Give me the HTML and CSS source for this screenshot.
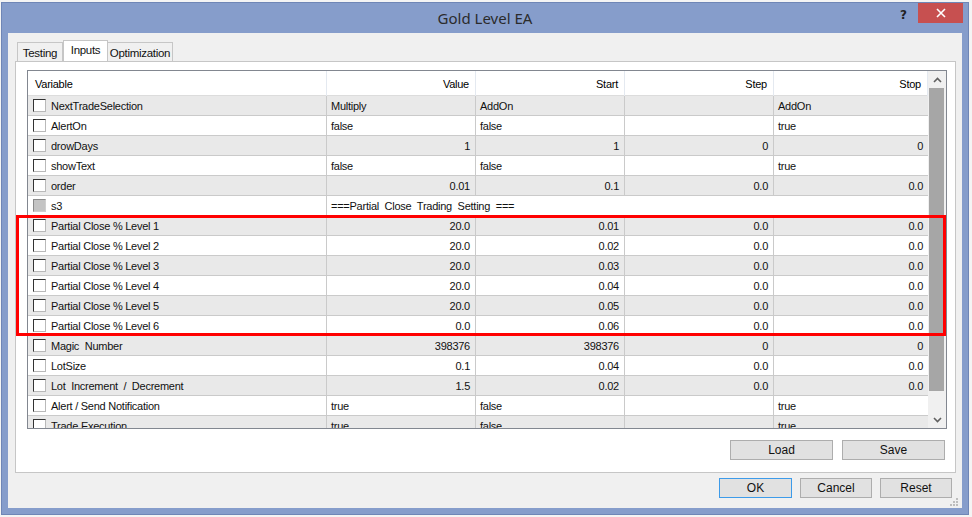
FILE: index.html
```html
<!DOCTYPE html>
<html lang="en">
<head>
    <meta charset="UTF-8">
    <title>Gold Level EA</title>
    <link rel="stylesheet" href="styles.css">
</head>
<body>

    <div class="window">
        <div class="titlebar">
            <div></div>
            <div class="title">Gold Level EA</div>
            <div class="controls">
                <span class="help">?</span>
                <span class="close">
                    <svg width="10" height="10" viewBox="0 0 10 10"><path d="M1 1L9 9M9 1L1 9" stroke="#fff" stroke-width="1.6"/></svg>
                </span>
            </div>
        </div>

        <div class="client">
            <div class="tabs">
                <div class="tab tab-testing">Testing</div>
                <div class="tab tab-inputs active">Inputs</div>
                <div class="tab tab-opt">Optimization</div>
            </div>

            <div class="panel">
                <div class="grid">
                    <div class="rows">
                        <div class="head">
                            <div class="hcell left">Variable</div>
                            <div class="hcell">Value</div>
                            <div class="hcell">Start</div>
                            <div class="hcell">Step</div>
                            <div class="hcell">Stop</div>
                        </div>

                        <div class="row grey">
                            <div class="cell var"><span class="check"></span>NextTradeSelection</div>
                            <div class="cell">Multiply</div>
                            <div class="cell">AddOn</div>
                            <div class="cell"></div>
                            <div class="cell">AddOn</div>
                        </div>
                        <div class="row">
                            <div class="cell var"><span class="check"></span>AlertOn</div>
                            <div class="cell">false</div>
                            <div class="cell">false</div>
                            <div class="cell"></div>
                            <div class="cell">true</div>
                        </div>
                        <div class="row grey">
                            <div class="cell var"><span class="check"></span>drowDays</div>
                            <div class="cell num">1</div>
                            <div class="cell num">1</div>
                            <div class="cell num">0</div>
                            <div class="cell num">0</div>
                        </div>
                        <div class="row">
                            <div class="cell var"><span class="check"></span>showText</div>
                            <div class="cell">false</div>
                            <div class="cell">false</div>
                            <div class="cell"></div>
                            <div class="cell">true</div>
                        </div>
                        <div class="row grey">
                            <div class="cell var"><span class="check"></span>order</div>
                            <div class="cell num">0.01</div>
                            <div class="cell num">0.1</div>
                            <div class="cell num">0.0</div>
                            <div class="cell num">0.0</div>
                        </div>
                        <div class="row">
                            <div class="cell var"><span class="check disabled"></span>s3</div>
                            <div class="cell span">===Partial  Close  Trading  Setting  ===</div>
                        </div>
                        <div class="row grey">
                            <div class="cell var"><span class="check"></span>Partial Close % Level 1</div>
                            <div class="cell num">20.0</div>
                            <div class="cell num">0.01</div>
                            <div class="cell num">0.0</div>
                            <div class="cell num">0.0</div>
                        </div>
                        <div class="row">
                            <div class="cell var"><span class="check"></span>Partial Close % Level 2</div>
                            <div class="cell num">20.0</div>
                            <div class="cell num">0.02</div>
                            <div class="cell num">0.0</div>
                            <div class="cell num">0.0</div>
                        </div>
                        <div class="row grey">
                            <div class="cell var"><span class="check"></span>Partial Close % Level 3</div>
                            <div class="cell num">20.0</div>
                            <div class="cell num">0.03</div>
                            <div class="cell num">0.0</div>
                            <div class="cell num">0.0</div>
                        </div>
                        <div class="row">
                            <div class="cell var"><span class="check"></span>Partial Close % Level 4</div>
                            <div class="cell num">20.0</div>
                            <div class="cell num">0.04</div>
                            <div class="cell num">0.0</div>
                            <div class="cell num">0.0</div>
                        </div>
                        <div class="row grey">
                            <div class="cell var"><span class="check"></span>Partial Close % Level 5</div>
                            <div class="cell num">20.0</div>
                            <div class="cell num">0.05</div>
                            <div class="cell num">0.0</div>
                            <div class="cell num">0.0</div>
                        </div>
                        <div class="row">
                            <div class="cell var"><span class="check"></span>Partial Close % Level 6</div>
                            <div class="cell num">0.0</div>
                            <div class="cell num">0.06</div>
                            <div class="cell num">0.0</div>
                            <div class="cell num">0.0</div>
                        </div>
                        <div class="row grey">
                            <div class="cell var"><span class="check"></span>Magic  Number</div>
                            <div class="cell num">398376</div>
                            <div class="cell num">398376</div>
                            <div class="cell num">0</div>
                            <div class="cell num">0</div>
                        </div>
                        <div class="row">
                            <div class="cell var"><span class="check"></span>LotSize</div>
                            <div class="cell num">0.1</div>
                            <div class="cell num">0.04</div>
                            <div class="cell num">0.0</div>
                            <div class="cell num">0.0</div>
                        </div>
                        <div class="row grey">
                            <div class="cell var"><span class="check"></span>Lot  Increment  /  Decrement</div>
                            <div class="cell num">1.5</div>
                            <div class="cell num">0.02</div>
                            <div class="cell num">0.0</div>
                            <div class="cell num">0.0</div>
                        </div>
                        <div class="row">
                            <div class="cell var"><span class="check"></span>Alert / Send Notification</div>
                            <div class="cell">true</div>
                            <div class="cell">false</div>
                            <div class="cell"></div>
                            <div class="cell">true</div>
                        </div>
                        <div class="row grey">
                            <div class="cell var"><span class="check"></span>Trade Execution</div>
                            <div class="cell">true</div>
                            <div class="cell">false</div>
                            <div class="cell"></div>
                            <div class="cell">true</div>
                        </div>
                    </div>

                    <div class="scrollbar">
                        <div class="arrow">
                            <svg width="9" height="6" viewBox="0 0 9 6"><path d="M1 5L4.5 1.5L8 5" fill="none" stroke="#606060" stroke-width="1.6"/></svg>
                        </div>
                        <div class="thumb"></div>
                        <div class="track"></div>
                        <div class="arrow">
                            <svg width="9" height="6" viewBox="0 0 9 6"><path d="M1 1L4.5 4.5L8 1" fill="none" stroke="#606060" stroke-width="1.6"/></svg>
                        </div>
                    </div>
                </div>

                <div class="panel-buttons">
                    <button class="btn wide">Load</button>
                    <button class="btn wide">Save</button>
                </div>

                <!-- red marker over the partial close rows -->
                <div class="highlight"></div>
            </div>

            <div class="dialog-buttons">
                <button class="btn default">OK</button>
                <button class="btn">Cancel</button>
                <button class="btn">Reset</button>
            </div>

            <svg class="grip" width="8" height="8" viewBox="0 0 8 8">
                <rect x="6" y="0" width="2" height="2" fill="#bdbdbd"/>
                <rect x="3" y="3" width="2" height="2" fill="#bdbdbd"/>
                <rect x="6" y="3" width="2" height="2" fill="#bdbdbd"/>
                <rect x="0" y="6" width="2" height="2" fill="#bdbdbd"/>
                <rect x="3" y="6" width="2" height="2" fill="#bdbdbd"/>
                <rect x="6" y="6" width="2" height="2" fill="#bdbdbd"/>
            </svg>
        </div>
    </div>

</body>
</html>
```

FILE: styles.css
```css
body {
    margin: 0;
    width: 972px;
    height: 517px;
    overflow: hidden;
    background-color: #f4f4f4;
    font-family: 'Liberation Sans', Arial, sans-serif;
}

.window {
    margin: 2px 0 0 1px;
    width: 966px;
    height: 511px;
    background-color: #869dcb;
    border: 1px solid #6f86b6;
}

/* title bar */
.titlebar {
    height: 30px;
    display: grid;
    grid-template-columns: 1fr auto 1fr;
}

.title {
    font-family: 'Noto Sans', 'Open Sans', sans-serif;
    font-size: 15px;
    color: #2b2b2b;
    line-height: 30px;
}

.controls {
    display: flex;
    justify-content: flex-end;
    align-items: flex-start;
    padding-right: 5px;
}

.help {
    font-family: 'DejaVu Sans', sans-serif;
    font-weight: bold;
    font-size: 12px;
    color: #222;
    margin: 5px 11px 0 0;
}

.close {
    width: 45px;
    height: 20px;
    background-color: #c75050;
    display: flex;
    justify-content: center;
    align-items: center;
}

/* client area */
.client {
    position: relative;
    margin: 0 6px 0 6px;
    height: 475px;
    background-color: #f0f0f0;
    padding: 7px 6px 0 7px;
    box-sizing: border-box;
}

.tabs {
    display: flex;
    align-items: flex-end;
    height: 21px;
    padding-left: 2px;
}

.tab {
    height: 18px;
    border: 1px solid #c6c6c6;
    border-bottom: none;
    font-size: 11.5px;
    letter-spacing: -0.3px;
    color: #111;
    text-align: center;
    line-height: 20px;
    white-space: nowrap;
    overflow: hidden;
}

.tab-testing { width: 44px; }
.tab-inputs { width: 43px; }
.tab-opt { width: 64px; border-left: none; }

.tab.active {
    height: 21px;
    background-color: #fff;
    margin-bottom: -1px;
    position: relative;
    line-height: 18px;
}

.panel {
    position: relative;
    background-color: #fff;
    border: 1px solid #c6c6c6;
    padding: 8px 8px 12px 11px;
}

/* parameter grid */
.grid {
    height: 357px;
    border: 1px solid #828790;
    display: flex;
    overflow: hidden;
}

.rows {
    width: 900px;
    font-size: 11px;
    letter-spacing: -0.25px;
    color: #111;
}

.head,
.row {
    display: grid;
    grid-template-columns: 299px 149px 149px 149px 154px;
}

.head {
    height: 25px;
    border-bottom: 1px solid #dcdcdc;
    box-sizing: border-box;
}

.hcell {
    border-right: 1px solid #e4e9f0;
    text-align: right;
    padding: 1px 6px 0 0;
    line-height: 24px;
    color: #000;
}

.hcell.left {
    text-align: left;
    padding-left: 7px;
}

.row {
    height: 20px;
    border-bottom: 1px solid #cacaca;
    box-sizing: border-box;
    background-color: #fff;
}

.row.grey {
    background-color: #e9e9e9;
}

.cell {
    border-right: 1px solid #cacaca;
    line-height: 19px;
    padding: 1px 0 0 4px;
    white-space: pre;
    overflow: hidden;
}

.cell:last-child {
    border-right: none;
}

.cell.num {
    text-align: right;
    padding: 1px 5px 0 0;
}

.cell.var {
    display: flex;
    align-items: flex-start;
    padding: 1px 0 0 5px;
}

.cell.span {
    grid-column: span 4;
}

.check {
    width: 11px;
    height: 11px;
    margin-top: 2px;
    background-color: #fff;
    border: 1px solid;
    border-color: #333 #b9b9b9 #b9b9b9 #333;
    margin-right: 5px;
    flex-shrink: 0;
}

.check.disabled {
    background-color: #c4c4c4;
    border-color: #8a8a8a #cfcfcf #cfcfcf #8a8a8a;
}

/* scrollbar */
.scrollbar {
    width: 18px;
    background-color: #f0f0f0;
    display: flex;
    flex-direction: column;
}

.arrow {
    height: 17px;
    display: flex;
    justify-content: center;
    align-items: center;
}

.thumb {
    height: 303px;
    margin: 0 2px 0 1px;
    background-color: #a6a6a6;
}

.track {
    flex: 1;
}

/* buttons */
.panel-buttons {
    display: flex;
    justify-content: flex-end;
    gap: 9px;
    margin-top: 11px;
    padding-right: 2px;
}

.btn {
    height: 20px;
    width: 72px;
    padding: 0;
    background-color: #e1e1e1;
    border: 1px solid #adadad;
    font-family: 'Liberation Sans', Arial, sans-serif;
    font-size: 12px;
    color: #111;
}

.btn.wide {
    width: 103px;
}

.btn.default {
    width: 73px;
    border-color: #3d9be9;
}

.dialog-buttons {
    display: flex;
    justify-content: flex-end;
    gap: 8px;
    margin-top: 5px;
    padding-right: 4px;
}

.highlight {
    position: absolute;
    left: 0;
    top: 153px;
    width: 924px;
    height: 115px;
    border: 3px solid #ff0000;
}

.grip {
    position: absolute;
    right: 4px;
    bottom: 2px;
}
```
